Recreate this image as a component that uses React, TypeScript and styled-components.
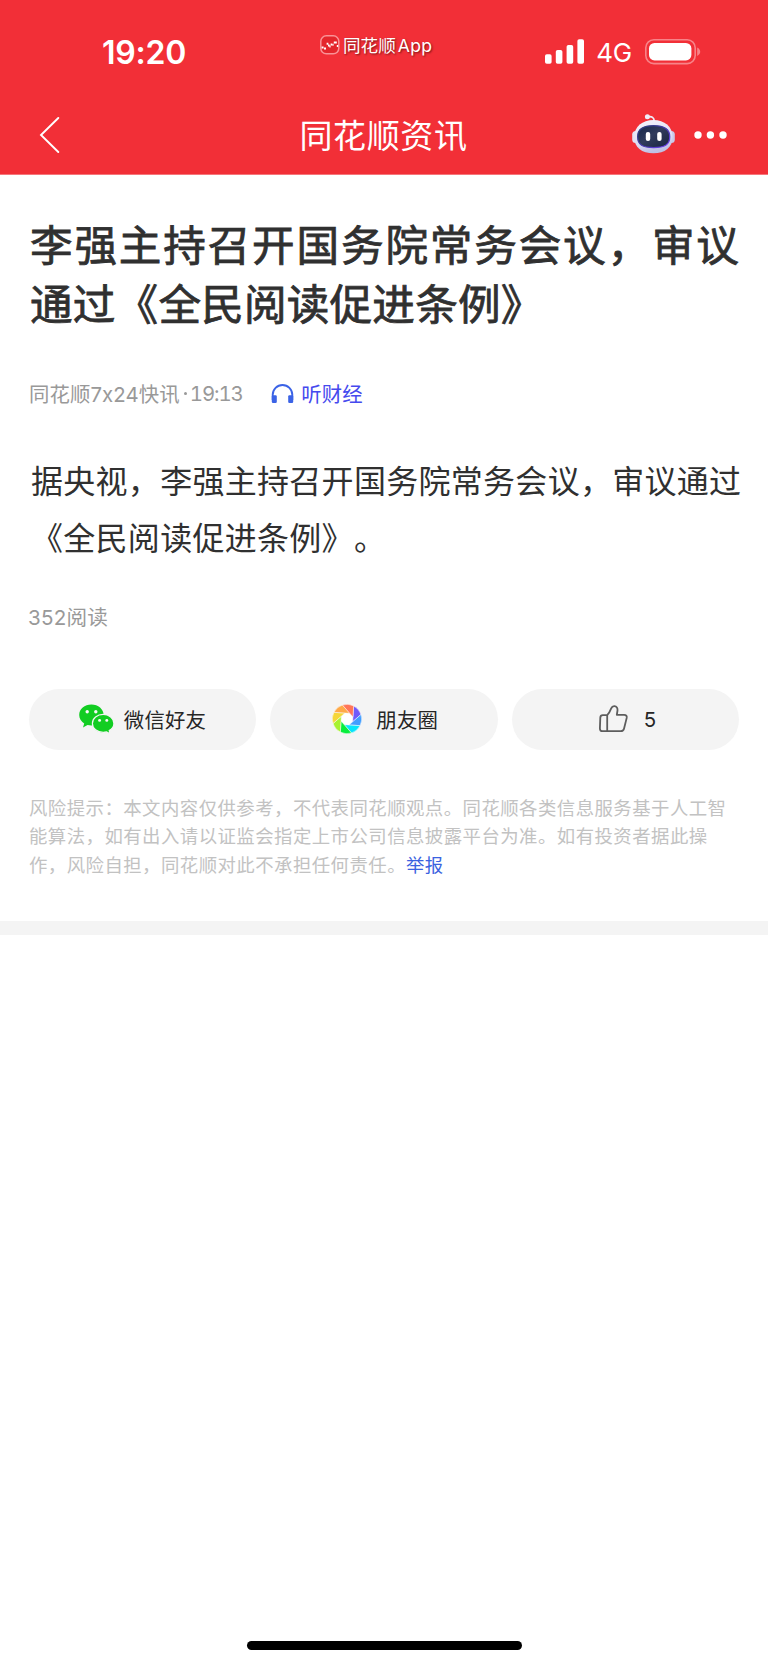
import React from "react";
import styled, { createGlobalStyle } from "styled-components";

const GlobalStyle = createGlobalStyle`
  * { box-sizing: border-box; }
  body {
    margin: 0;
    background: #fff;
    font-family: Inter, "Noto Sans CJK SC", sans-serif;
    color: #303030;
    text-spacing-trim: space-all;
  }
  h1, p { margin: 0; }
  svg { display: block; flex: none; }
  button { border: 0; padding: 0; background: none; font: inherit; color: inherit; }
`;

const Page = styled.div`
  width: 768px;
  height: 1665px;
  display: flex;
  flex-direction: column;
  overflow: hidden;
`;

const Header = styled.header`
  height: 175px;
  background: #f22f37;
  color: #fff;
  border-bottom: 1px solid #f6767b;
`;

const StatusBar = styled.div`
  height: 98px;
  padding: 0 67px 0 102px;
  display: grid;
  grid-template-columns: 218px 1fr auto;
  align-items: start;
`;

const Clock = styled.span`
  padding-top: 34px;
  font-size: 32px;
  line-height: 37px;
  font-weight: 600;
  letter-spacing: -0.2px;
`;

const AppTag = styled.div`
  padding-top: 31px;
  display: flex;
  align-items: center;
  gap: 3px;
  font-size: 17.6px;
  line-height: 26px;
  white-space: nowrap;
  text-shadow: 1px 1px 2px rgba(60, 0, 0, 0.65);
`;

const AppName = styled.span`
  padding-top: 2px;
`;

const AppWord = styled.span`
  margin-left: 2px;
  letter-spacing: 0.3px;
`;

const Signals = styled.div`
  padding-top: 39.4px;
  display: flex;
  align-items: flex-start;
`;

const Network = styled.span`
  margin: 0 13px 0 12px;
  font-size: 26px;
  line-height: 28px;
  letter-spacing: -0.2px;
`;

const NavBar = styled.nav`
  height: 74px;
  padding: 0 40px 0 39px;
  display: grid;
  grid-template-columns: 1fr auto 1fr;
  align-items: center;
`;

const NavTitle = styled.span`
  padding-top: 2px;
  font-size: 33px;
  line-height: 44px;
  letter-spacing: 0.6px;
`;

const NavActions = styled.div`
  display: flex;
  align-items: center;
  justify-content: flex-end;
  gap: 18px;
`;

const Assistant = styled.button`
  padding-bottom: 3px;
`;

const Article = styled.article`
  padding: 41px 29px 42px;
  white-space: nowrap;
`;

const Headline = styled.h1`
  padding-left: 1px;
  font-size: 42.6px;
  line-height: 59.2px;
  font-weight: 400;
  -webkit-text-stroke: 0.8px #303030;
`;

const HeadlineRow = styled.span<{ $spacing: number }>`
  display: block;
  letter-spacing: ${(p) => p.$spacing}px;
`;

const Meta = styled.div`
  margin-top: 44px;
  height: 30px;
  display: flex;
  align-items: center;
  font-size: 20.4px;
  color: #999;
`;

const Source = styled.span`
  letter-spacing: 0.1px;
`;

const Dot = styled.span`
  width: 3px;
  height: 3px;
  margin: 1px 3px 0 4px;
  border-radius: 50%;
  background: #999;
`;

const Time = styled.span`
  font-variant-numeric: tabular-nums;
  letter-spacing: -1.1px;
`;

const Listen = styled.button`
  margin-left: 28.6px;
  display: flex;
  align-items: center;
  gap: 7px;
  color: #4549ee;
  letter-spacing: 0.1px;
`;

const Body = styled.p`
  margin-top: 46px;
  padding-left: 2px;
  font-size: 32px;
  line-height: 56.8px;
  letter-spacing: 0.29px;
`;

const ReadCount = styled.p`
  margin-top: 35px;
  margin-left: -1px;
  font-size: 20.6px;
  line-height: 30px;
  letter-spacing: 0.2px;
  color: #999;
`;

const Actions = styled.div`
  margin-top: 56px;
  display: grid;
  grid-template-columns: repeat(3, 1fr);
  gap: 14.4px;
`;

const Pill = styled.button<{ $gap: number; $shift?: number }>`
  height: 60.6px;
  padding-left: ${(p) => p.$shift ?? 0}px;
  border-radius: 31px;
  background: #f4f4f4;
  display: flex;
  align-items: center;
  justify-content: center;
  gap: ${(p) => p.$gap}px;
  font-size: 20.4px;
  letter-spacing: 0.2px;
  color: #262626;
`;

const Disclaimer = styled.p`
  margin-top: 44px;
  font-size: 18.4px;
  line-height: 28.6px;
  letter-spacing: 0.46px;
  color: #c2c2c2;
`;

const Report = styled.a`
  color: #3a62e0;
`;

const Divider = styled.div`
  height: 14px;
  background: #f4f4f4;
`;

const HomeIndicator = styled.div`
  width: 275px;
  height: 9.4px;
  margin: auto auto 14.6px;
  border-radius: 5px;
  background: #000;
`;

const AppLogo = () => (
  <svg width="20" height="20" viewBox="0 0 20 20" fill="none">
    <rect x="0.8" y="0.8" width="18" height="18" rx="5.5" fill="#e4262c" stroke="#f99296" strokeWidth="1.5" />
    <path
      d="M1.6 12.6h2M4 13.4h2M6.6 8.8h1.8M8 10.6h1.6M9.4 11.4h1.2M10.6 9.6h1.6M12.4 9.8h1.2M13.8 7.6h3M16.8 11h1.4"
      stroke="#fff"
      strokeWidth="2"
    />
  </svg>
);

const SignalBars = () => (
  <svg width="39" height="25" viewBox="0 0 39 25" fill="#fff">
    <rect x="0" y="15.3" width="6.6" height="9.4" rx="1.8" />
    <rect x="10.8" y="11" width="6.6" height="13.7" rx="1.8" />
    <rect x="21.6" y="6" width="6.6" height="18.7" rx="1.8" />
    <rect x="32.4" y="0.3" width="6.6" height="24.4" rx="1.8" />
  </svg>
);

const Battery = () => (
  <svg width="56" height="26" viewBox="0 0 56 26">
    <rect x="0.8" y="0.8" width="49.4" height="23.8" rx="8" fill="none" stroke="#f88388" strokeWidth="1.6" />
    <rect x="4" y="4" width="42.4" height="17.4" rx="5.5" fill="#fff" />
    <path d="M52.2 8.6c4 2 4 6.400 0 8.400z" fill="#f88388" />
  </svg>
);

const BackIcon = () => (
  <svg width="21" height="36" viewBox="0 0 21 36" fill="none" stroke="#fff" strokeWidth="1.9">
    <path d="M19.300 1 2 18l17.300 17" strokeLinecap="round" />
  </svg>
);

const Robot = () => (
  <svg width="43" height="40" viewBox="0 0 43 40">
    <defs>
      <linearGradient id="shell" x1="0" y1="0" x2="0.3" y2="1">
        <stop offset="0" stopColor="#f6f5fc" />
        <stop offset="0.7" stopColor="#dddcf3" />
        <stop offset="1" stopColor="#bfc0e4" />
      </linearGradient>
      <linearGradient id="visor" x1="0" y1="0" x2="1" y2="1">
        <stop offset="0" stopColor="#17284a" />
        <stop offset="0.45" stopColor="#313b5c" />
        <stop offset="1" stopColor="#18233f" />
      </linearGradient>
      <linearGradient id="rim" x1="0" y1="0" x2="1" y2="1">
        <stop offset="0" stopColor="#263b70" />
        <stop offset="1" stopColor="#6d3df0" />
      </linearGradient>
    </defs>
    <path d="M16 2.8c4-.8 6 .8 6.3 4.2" fill="none" stroke="#efeefa" strokeWidth="1.7" />
    <circle cx="15.4" cy="2.8" r="2.5" fill="#efeefa" />
    <rect x="0.2" y="17" width="7" height="12" rx="3.5" fill="#e2e2f5" />
    <rect x="35.8" y="17" width="7" height="12" rx="3.5" fill="#c9c9e8" />
    <path
      d="M21.4 6C32.4 6 40.6 12.6 40.6 23S33 39.3 21.4 39.3 2.2 33.4 2.2 23 10.4 6 21.4 6z"
      fill="url(#shell)"
    />
    <path
      d="M21.6 11.6c10.6 0 16.2 3 16.2 11.2s-5.4 10.8-16.2 10.8S5.6 31 5.6 22.8s5.4-11.2 16-11.2z"
      fill="url(#visor)"
      stroke="url(#rim)"
      strokeWidth="1.2"
    />
    <rect x="13.8" y="18" width="4.4" height="9" rx="2.1" fill="#fff" />
    <rect x="25.2" y="18" width="4.4" height="9" rx="2.1" fill="#fff" />
  </svg>
);

const MoreDots = () => (
  <svg width="35" height="8" viewBox="0 0 35 8" fill="#fff">
    <circle cx="5" cy="4" r="3.7" />
    <circle cx="17.4" cy="4" r="3.7" />
    <circle cx="30" cy="4" r="3.7" />
  </svg>
);

const Headphones = () => (
  <svg width="23" height="21" viewBox="0 0 23 21">
    <path d="M1.7 17v-5.2a9.8 9.8 0 0 1 19.6 0V17" fill="none" stroke="#3b63e6" strokeWidth="1.9" />
    <rect x="0.8" y="12.2" width="5" height="7.8" rx="1.2" fill="#3b63e6" />
    <rect x="17.2" y="12.2" width="5" height="7.8" rx="1.2" fill="#3b63e6" />
  </svg>
);

const WeChat = () => (
  <svg width="35" height="30" viewBox="0 0 35 30">
    <path
      d="M12.4.6C5.6.6.2 5.2.2 11.1c0 3.5 1.9 6.5 5 8.4L4 23.4l4.5-2.3c1.3.3 2.6.5 3.9.5 6.8 0 12.3-4.7 12.3-10.5S19.2.6 12.4.6z"
      fill="#12cd22"
    />
    <path
      d="M24.2 10.4c-6 0-10.8 4-10.8 9s4.8 9 10.8 9c1.2 0 2.4-.2 3.4-.5l3.4 1.8-.8-3.2c2.9-1.7 4.7-4.2 4.7-7.1 0-5-4.8-9-10.7-9z"
      fill="#12cd22"
      stroke="#f4f4f4"
      strokeWidth="1.2"
    />
    <circle cx="8.2" cy="7.8" r="1.7" fill="#f8f8f8" />
    <circle cx="16.8" cy="7.8" r="1.7" fill="#f8f8f8" />
    <circle cx="20.6" cy="16.4" r="1.45" fill="#f8f8f8" />
    <circle cx="27.8" cy="16.4" r="1.45" fill="#f8f8f8" />
  </svg>
);

const bladeColors = ["#7059fb", "#419dff", "#08e4fb", "#07ee3d", "#a8f22f", "#f5d638", "#ffa947", "#ff7558"];

const polar = (radius: number, degrees: number) => {
  const a = (degrees * Math.PI) / 180;
  return `${(15 + radius * Math.cos(a)).toFixed(2)} ${(15 + radius * Math.sin(a)).toFixed(2)}`;
};

const Moments = () => (
  <svg width="30" height="30" viewBox="0 0 30 30">
    <circle cx="15" cy="15" r="6.4" fill="#fff" />
    {bladeColors.map((color, i) => {
      const start = -63 + i * 45;
      return (
        <path
          key={color}
          d={`M${polar(14.7, start)}A14.7 14.7 0 0 1 ${polar(14.7, start + 45)}L${polar(6.3, start + 89.3)}Z`}
          fill={color}
          stroke="#fbfbfb"
          strokeWidth="0.5"
        />
      );
    })}
  </svg>
);

const ThumbUp = () => (
  <svg width="29" height="28" viewBox="0 0 29 28" fill="none" stroke="#5d5d5d" strokeWidth="1.8" strokeLinejoin="round">
    <path d="M8.2 10.2H3.8c-1.5 0-2.4.9-2.5 2.4L.9 23.4c0 1.7.9 2.8 2.6 2.8h18.3c1.7 0 2.8-.8 3.2-2.4l2.7-10.9c.4-1.8-.7-3.1-2.5-3.1h-7.4l.7-4.3c.3-2.3-.9-4.2-3.1-4.4-1.6-.1-2.6.8-3.2 2.3-1.1 2.8-2.2 5.1-4 6.8z" />
    <path d="M8.2 10.2v16" />
  </svg>
);

export default function App() {
  return (
    <>
      <GlobalStyle />
      <Page>
        <Header>
          <StatusBar>
            <Clock>19:20</Clock>
            <AppTag>
              <AppLogo />
              <AppName>同花顺<AppWord>App</AppWord></AppName>
            </AppTag>
            <Signals>
              <SignalBars />
              <Network>4G</Network>
              <Battery />
            </Signals>
          </StatusBar>
          <NavBar>
            <button aria-label="返回"><BackIcon /></button>
            <NavTitle>同花顺资讯</NavTitle>
            <NavActions>
              <Assistant><Robot /></Assistant>
              <MoreDots />
            </NavActions>
          </NavBar>
        </Header>
        <Article>
          <Headline>
            <HeadlineRow $spacing={1.83}>李强主持召开国务院常务会议，审议</HeadlineRow>
            <HeadlineRow $spacing={0.2}>通过《全民阅读促进条例》</HeadlineRow>
          </Headline>
          <Meta>
            <Source>同花顺7x24快讯</Source>
            <Dot />
            <Time>19:13</Time>
            <Listen>
              <Headphones />
              听财经
            </Listen>
          </Meta>
          <Body>
            据央视，李强主持召开国务院常务会议，审议通过
            <br />
            《全民阅读促进条例》。
          </Body>
          <ReadCount>352阅读</ReadCount>
          <Actions>
            <Pill $gap={10}><WeChat />微信好友</Pill>
            <Pill $gap={14.5} $shift={2}><Moments />朋友圈</Pill>
            <Pill $gap={16} $shift={4}><ThumbUp />5</Pill>
          </Actions>
          <Disclaimer>
            风险提示：本文内容仅供参考，不代表同花顺观点。同花顺各类信息服务基于人工智
            <br />
            能算法，如有出入请以证监会指定上市公司信息披露平台为准。如有投资者据此操
            <br />
            作，风险自担，同花顺对此不承担任何责任。<Report>举报</Report>
          </Disclaimer>
        </Article>
        <Divider />
        <HomeIndicator />
      </Page>
    </>
  );
}
